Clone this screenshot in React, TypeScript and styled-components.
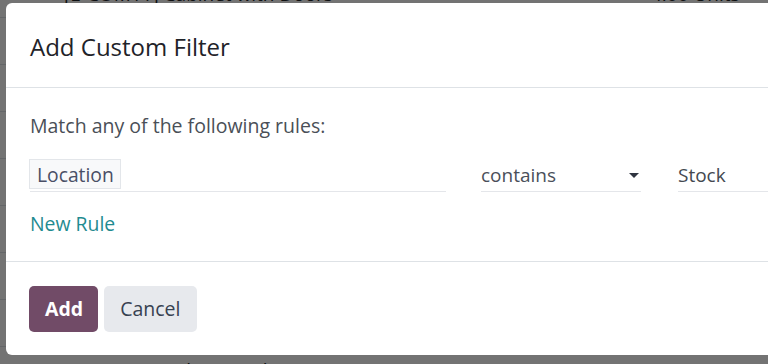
import React from "react";
import styled, { createGlobalStyle } from "styled-components";

const Global = createGlobalStyle`
  html, body { margin: 0; padding: 0; }
  body {
    width: 768px;
    height: 364px;
    overflow: hidden;
    background: #ffffff;
    font-family: "Open Sans", "Noto Sans", sans-serif;
  }
  #root { height: 364px; overflow: hidden; }
`;

const ListBehind = styled.div`
  margin-top: -29px;
`;

const ListRow = styled.div`
  height: 46px;
  display: flex;
  align-items: center;
  border-bottom: 1px solid #dee2e6;
  font-size: 19px;
  color: #212529;
  white-space: nowrap;
`;

const ProductCell = styled.span`
  margin-left: 64px;
  width: 587px;
`;

const QtyCell = styled.span``;

const Backdrop = styled.div`
  position: fixed;
  inset: 0;
  background: rgba(0, 0, 0, 0.55);
  overflow: hidden;
`;

const Dialog = styled.div`
  margin: 3px 0 0 6px;
  width: 820px;
  height: 352px;
  background: #ffffff;
  border-radius: 6px;
  display: flex;
  flex-direction: column;
`;

const Header = styled.header`
  flex: none;
  border-bottom: 1px solid #dee2e6;
  display: flex;
  align-items: center;
  padding: 3px 24px 0 24px;
  box-sizing: content-box;
  height: 81px;
`;

const Title = styled.h4`
  margin: 0;
  font-size: 24px;
  font-weight: 400;
  color: #1f2329;
`;

const Body = styled.div`
  height: 174px;
  flex: none;
  box-sizing: border-box;
  border-bottom: 1px solid #dee2e6;
  padding: 24px 24px 0 24px;
  display: flex;
  flex-direction: column;
`;

const Intro = styled.p`
  margin: 0;
  font-size: 19.5px;
  line-height: 28px;
  color: #4a4f57;
`;

const RuleRow = styled.div`
  margin-top: 19px;
  display: flex;
  align-items: flex-end;
`;

const Field = styled.div<{ $w: number; $gap?: number }>`
  width: ${(p) => p.$w}px;
  margin-right: ${(p) => p.$gap ?? 0}px;
  flex: none;
  box-sizing: border-box;
  height: 33px;
  border-bottom: 1px solid #e4e6ea;
  display: flex;
  align-items: center;
  font-size: 19px;
  color: #4a4f5a;
`;

const PathTag = styled.span`
  margin-left: -1px;
  margin-top: -2px;
  height: 30px;
  box-sizing: border-box;
  padding: 0 6px 0 7px;
  display: inline-flex;
  align-items: center;
  background: #f8f9fa;
  border: 1px solid #e3e6ea;
  color: #4a4f66;
  font-size: 19.3px;
`;

const OpText = styled.span`
  flex: 1;
`;

const Caret = styled.span`
  width: 0;
  height: 0;
  margin-right: 2px;
  border-left: 5px solid transparent;
  border-right: 5px solid transparent;
  border-top: 5px solid #2f3440;
`;

const ValueText = styled.span`
  color: #444850;
`;

const NewRule = styled.a`
  margin-top: 18px;
  font-size: 19.4px;
  line-height: 28px;
  color: #1f8b90;
  text-decoration: none;
  align-self: flex-start;
  cursor: pointer;
`;

const Footer = styled.footer`
  flex: 1;
  display: flex;
  align-items: center;
  gap: 6px;
  padding: 0 23px;
`;

const Button = styled.button<{ $primary?: boolean }>`
  height: 46px;
  box-sizing: border-box;
  padding: ${(p) => (p.$primary ? "0 15px 0 16px" : "0 17px 0 16px")};
  border: none;
  border-radius: 5px;
  font-family: inherit;
  font-size: 19.5px;
  font-weight: ${(p) => (p.$primary ? 700 : 500)};
  background: ${(p) => (p.$primary ? "#714b67" : "#e7e9ed")};
  color: ${(p) => (p.$primary ? "#ffffff" : "#374151")};
  cursor: pointer;
`;

const rows = [
  ["[E-COM11] Cabinet with Doors", "4.00 Units"],
  ["[E-COM11] Cabinet with Doors", "12.00 Units"],
  ["[E-COM11] Cabinet with Doors", "8.00 Units"],
  ["[E-COM11] Cabinet with Doors", "5.00 Units"],
  ["[E-COM11] Cabinet with Doors", "2.00 Units"],
  ["[E-COM11] Cabinet with Doors", "7.00 Units"],
  ["[E-COM11] Cabinet with Doors", "9.00 Units"],
  ["[E-COM11] Cabinet with Doors", "1.00 Units"],
  ["[E-COM11] Cabinet with Doors", "33.00 Units"],
];

export default function App() {
  return (
    <>
      <Global />
      <ListBehind>
        {rows.map(([p, q], i) => (
          <ListRow key={i}>
            <ProductCell>{p}</ProductCell>
            <QtyCell>{q}</QtyCell>
          </ListRow>
        ))}
      </ListBehind>
      <Backdrop>
        <Dialog role="dialog">
          <Header>
            <Title>Add Custom Filter</Title>
          </Header>
          <Body>
            <Intro>Match any of the following rules:</Intro>
            <RuleRow>
              <Field $w={416} $gap={35}>
                <PathTag>Location</PathTag>
              </Field>
              <Field $w={160} $gap={37}>
                <OpText>contains</OpText>
                <Caret />
              </Field>
              <Field $w={200}>
                <ValueText>Stock</ValueText>
              </Field>
            </RuleRow>
            <NewRule>New Rule</NewRule>
          </Body>
          <Footer>
            <Button $primary>Add</Button>
            <Button>Cancel</Button>
          </Footer>
        </Dialog>
      </Backdrop>
    </>
  );
}
